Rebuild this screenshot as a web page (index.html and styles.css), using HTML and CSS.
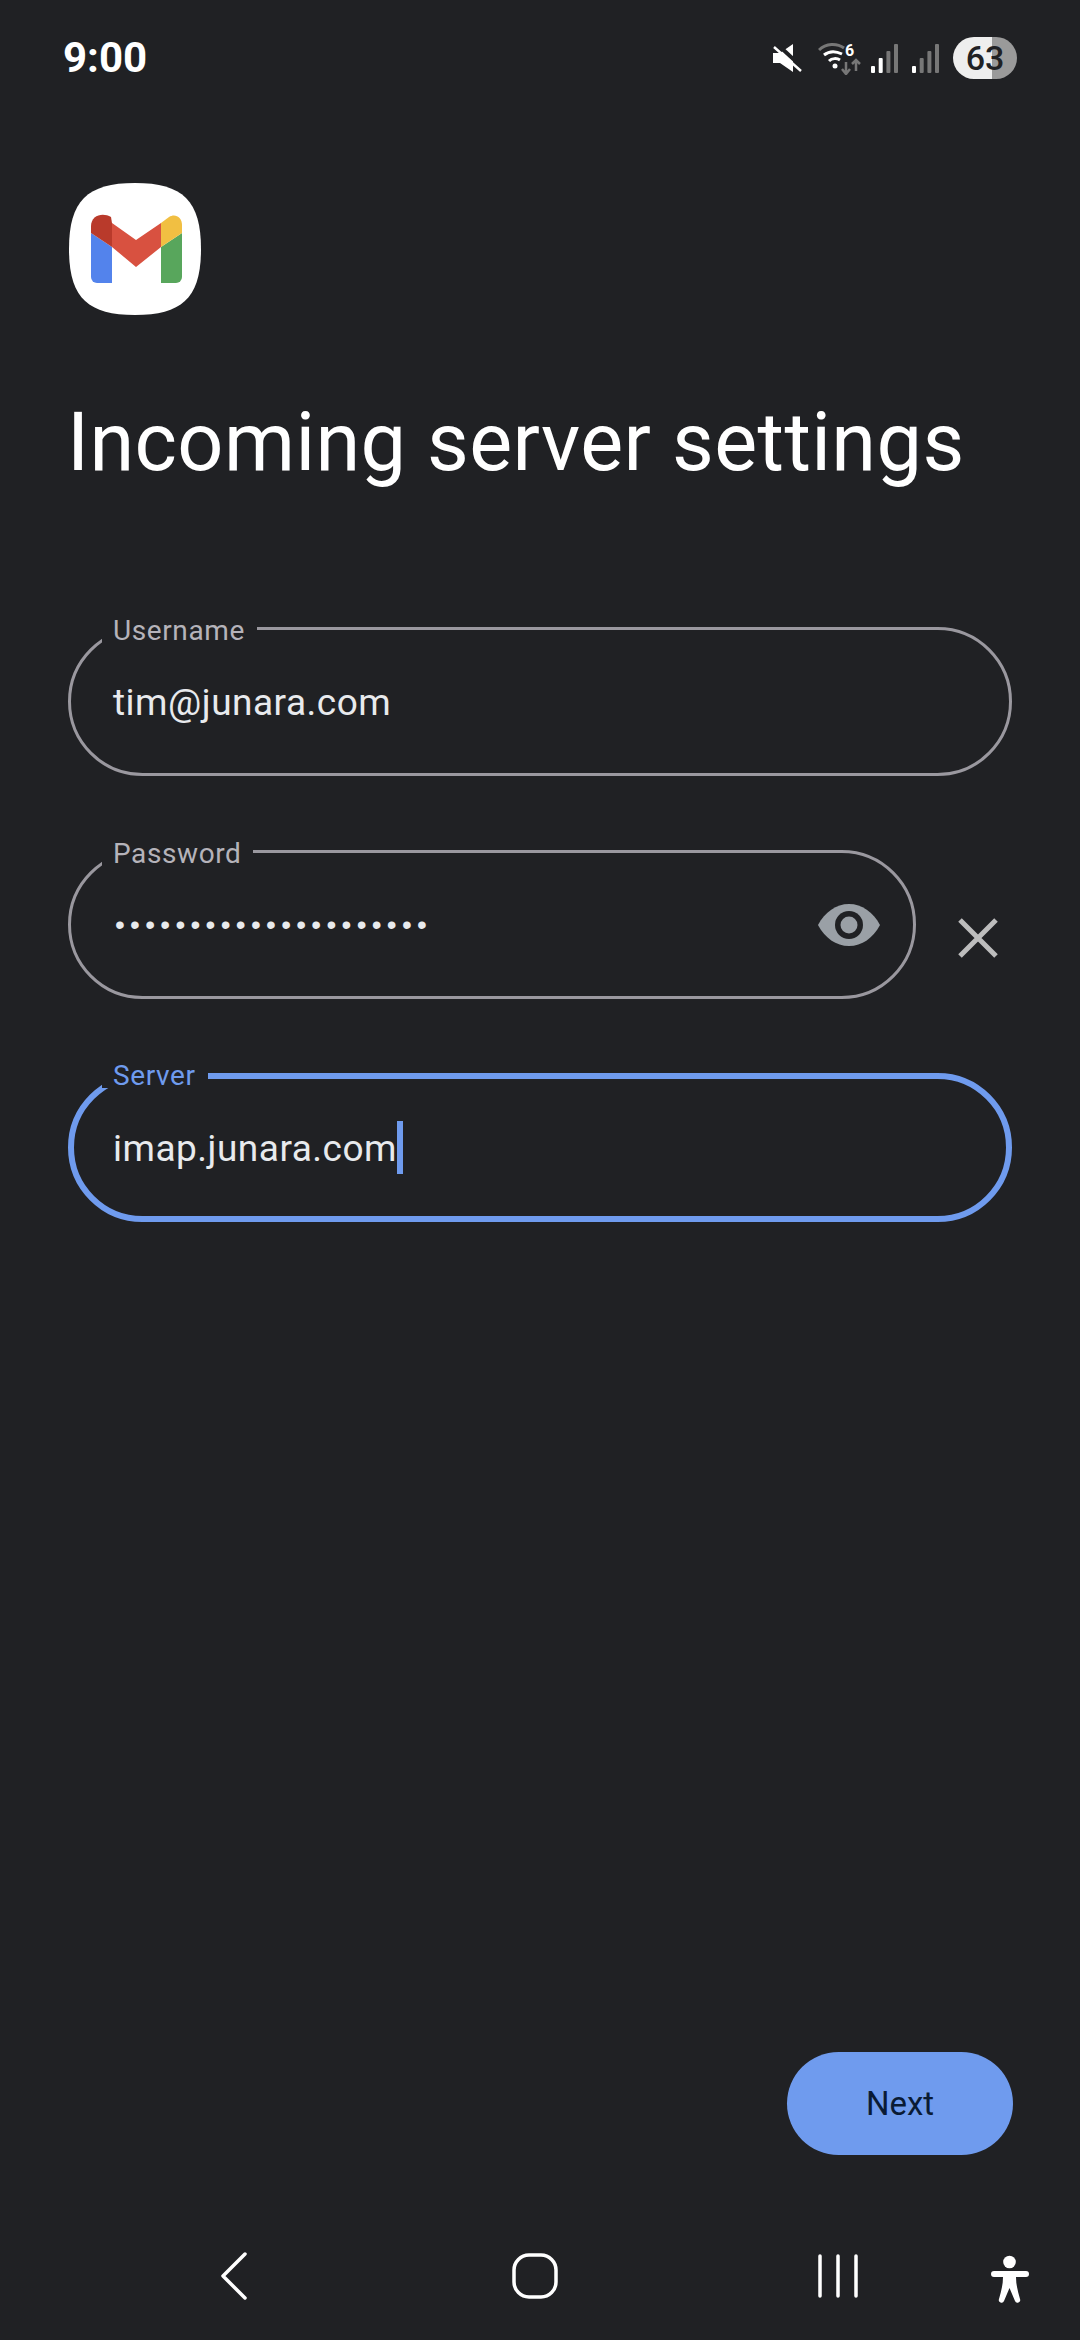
FILE: index.html
```html
<!DOCTYPE html>
<html lang="en">
  <head>
    <meta charset="UTF-8" />
    <title>Incoming server settings</title>
    <link rel="stylesheet" href="styles.css">
  </head>
  <body>
    <div class="statusBar">
      <span class="time">9:00</span>
      <div class="statusIcons">
        <svg class="muteIcon" width="29" height="28" viewBox="0 0 29 28">
          <path d="M0 9h7L20 0v28L7 19H0z" fill="#fff"/>
          <path d="M4 0l27 25" stroke="#202124" stroke-width="4" fill="none"/>
          <path d="M1 3l27 24" stroke="#fff" stroke-width="2.500" fill="none"/>
        </svg>
        <svg class="wifiIcon" width="44" height="36" viewBox="0 -4 44 36">
          <path d="M1 7C8 0 19 0 26 5" stroke="#777" stroke-width="3" fill="none"/>
          <path d="M6 12c5-4 12-4 18-1M11 18c3-3 8-3 11-1" stroke="#fff" stroke-width="3" fill="none"/>
          <circle cx="17" cy="23" r="2.500" fill="#fff"/>
          <path d="M28 19v12M24 26l4 5 4-5" stroke="#777" stroke-width="2.500" fill="none"/>
          <path d="M38 28V17M34 21l4-4 4 4" stroke="#777" stroke-width="2.500" fill="none"/>
          <text x="27" y="13" class="wifiSix">6</text>
        </svg>
        <svg class="signalIcon signalFirst" width="27" height="29" viewBox="0 0 27 29">
          <rect x="0" y="22" width="4" height="7" rx="1" fill="#fff"/>
          <rect x="7.700" y="14" width="4" height="15" rx="1" fill="#fff"/>
          <rect x="15.400" y="7" width="4" height="22" rx="1" fill="#777"/>
          <rect x="23" y="0" width="4" height="29" rx="1" fill="#777"/>
        </svg>
        <svg class="signalIcon" width="27" height="29" viewBox="0 0 27 29">
          <rect x="0" y="22" width="4" height="7" rx="1" fill="#fff"/>
          <rect x="7.700" y="14" width="4" height="15" rx="1" fill="#777"/>
          <rect x="15.400" y="7" width="4" height="22" rx="1" fill="#777"/>
          <rect x="23" y="0" width="4" height="29" rx="1" fill="#777"/>
        </svg>
        <span class="battery">63</span>
      </div>
    </div>

    <main class="content">
      <svg class="appLogo" width="132" height="132" viewBox="0 0 132 132">
        <path d="M66 0C114 0 132 18 132 66S114 132 66 132 0 114 0 66 18 0 66 0z" fill="#fff"/>
        <path d="M22 50l21 14v36H28a6 6 0 0 1-6-6z" fill="#5383ec"/>
        <path d="M113 50L92 64v36h15a6 6 0 0 0 6-6z" fill="#58a65c"/>
        <path d="M43 40l24 17 25-17v24L67 84 43 64z" fill="#d85140"/>
        <path d="M22 50v-7c0-11 12-14 20-9l1 6v24z" fill="#b93a2b"/>
        <path d="M92 40l8-6c6-4 13 0 13 8v8L92 64z" fill="#f1bf42"/>
      </svg>

      <h1 class="pageTitle">Incoming server settings</h1>

      <div class="fieldList">
        <div class="fieldRow">
          <div class="field">
            <span class="fieldLabel">Username</span>
            <span class="fieldValue">tim@junara.com</span>
          </div>
        </div>

        <div class="fieldRow">
          <div class="field fieldPassword">
            <span class="fieldLabel">Password</span>
            <span class="fieldValue passwordDots">•••••••••••••••••••••</span>
            <svg class="eyeIcon" width="62" height="42" viewBox="0 0 62 42">
              <path d="M0 21C7 8 18 0 31 0s24 8 31 21c-7 13-18 21-31 21S7 34 0 21z" fill="#9aa0a6"/>
              <circle cx="31" cy="21" r="14" fill="#202124"/>
              <circle cx="31" cy="21" r="8.500" fill="#9aa0a6"/>
            </svg>
          </div>
          <svg class="clearIcon" width="40" height="40" viewBox="0 0 40 40">
            <path d="M2 2l36 36M38 2L2 38" stroke="#bdbdbd" stroke-width="5" fill="none"/>
          </svg>
        </div>

        <div class="fieldRow">
          <div class="field fieldFocused">
            <span class="fieldLabel">Server</span>
            <span class="fieldValue">imap.junara.com</span>
            <i class="caret"></i>
          </div>
        </div>
      </div>
    </main>

    <div class="actions">
      <button class="nextBtn">Next</button>
    </div>

    <nav class="navBar">
      <svg class="navBack" width="28" height="48" viewBox="0 0 28 48">
        <path d="M25 2L3 24l22 22" stroke="#fff" stroke-width="3.500" fill="none" stroke-linecap="round" stroke-linejoin="round"/>
      </svg>
      <svg class="navHome" width="46" height="48" viewBox="0 0 46 48">
        <rect x="2" y="3" width="42" height="42" rx="15" stroke="#fff" stroke-width="3.500" fill="none"/>
      </svg>
      <svg class="navRecents" width="40" height="48" viewBox="0 0 40 48">
        <path d="M2 4v40M20 4v40M38 4v40" stroke="#fff" stroke-width="3.500" stroke-linecap="round" fill="none"/>
      </svg>
      <svg class="navPerson" width="38" height="54" viewBox="0 0 38 54">
        <circle cx="18.500" cy="10" r="6.300" fill="#fff"/>
        <path d="M3 19h32a3 3 0 0 1 0 6H25c0 8 2 15 4 22a2.500 2.500 0 0 1-5 2L18.500 36 13 49a2.500 2.500 0 0 1-5-2c2-7 4-14 4-22H3a3 3 0 0 1 0-6z" fill="#fff"/>
      </svg>
    </nav>
  </body>
</html>
```

FILE: styles.css
```css
* {
  box-sizing: border-box;
}

body {
  margin: 0;
  width: 1080px;
  height: 2340px;
  background: #202124;
  color: #e8eaed;
  font-family: Roboto, sans-serif;
  display: flex;
  flex-direction: column;
  overflow: hidden;
}

.statusBar {
  height: 116px;
  padding: 33px 63px 0 63px;
  display: flex;
  justify-content: space-between;
  align-items: flex-start;
}

.time {
  font-weight: 700;
  font-size: 42px;
  line-height: 50px;
  color: #fff;
}

.statusIcons {
  display: flex;
  align-items: center;
  height: 50px;
}

.wifiIcon {
  margin-left: 16px;
  margin-top: -2px;
}

.wifiSix {
  font-weight: 700;
  font-size: 16px;
  fill: #fff;
}

.signalIcon {
  margin-left: 14px;
}

.signalFirst {
  margin-left: 9px;
}

.battery {
  width: 64px;
  height: 42px;
  border-radius: 21px;
  margin-left: 14px;
  background: linear-gradient(to right, #eeeeee 61%, #9a9a9a 61%);
  color: #202124;
  font-weight: 500;
  font-size: 34px;
  line-height: 42px;
  text-align: center;
}

.content {
  flex: 1;
  padding: 67px 0 0 68px;
}

.appLogo {
  display: block;
  margin-left: 1px;
}

.pageTitle {
  margin: 82px 0 0 -1px;
  font-weight: 400;
  font-size: 81px;
  line-height: 92px;
  letter-spacing: 0.400px;
  color: #fff;
}

.fieldList {
  margin-top: 138px;
  width: 944px;
  display: flex;
  flex-direction: column;
  gap: 74px;
}

.fieldRow {
  display: flex;
  align-items: center;
}

.field {
  position: relative;
  flex: 1;
  height: 149px;
  border: 3px solid #9a989f;
  border-radius: 75px;
  padding: 0 42px;
  display: flex;
  align-items: center;
}

.fieldLabel {
  position: absolute;
  left: 31px;
  top: -11px;
  padding: 0 12px 0 11px;
  background: #202124;
  font-size: 28px;
  line-height: 24px;
  letter-spacing: 0.600px;
  color: #b5b3ba;
}

.fieldValue {
  padding-top: 2px;
  font-size: 37px;
  letter-spacing: 0.500px;
  color: #e8eaed;
  white-space: nowrap;
}

.fieldPassword {
  flex: none;
  width: 848px;
  padding-right: 33px;
}

.passwordDots {
  margin-left: 2px;
  padding-top: 0;
  font-family: "Liberation Sans", sans-serif;
  font-size: 28px;
  letter-spacing: 5.300px;
}

.eyeIcon {
  margin-left: auto;
}

.clearIcon {
  margin: 26px 0 0 42px;
}

.fieldFocused {
  border: 6px solid #6f9bee;
  padding: 0 39px;
}

.fieldFocused .fieldLabel {
  color: #6f9bee;
  left: 28px;
  top: -15px;
}

.caret {
  width: 6px;
  height: 53px;
  background: #6f9bee;
}

.actions {
  padding: 0 67px 0 0;
  display: flex;
  justify-content: flex-end;
}

.nextBtn {
  width: 226px;
  height: 103px;
  border: none;
  border-radius: 52px;
  background: #6f9bee;
  color: #0a1b35;
  font-family: Roboto, sans-serif;
  font-weight: 400;
  font-size: 33px;
}

.navBar {
  height: 185px;
  display: flex;
  align-items: flex-start;
  padding-top: 97px;
}

.navBack {
  margin-left: 220px;
}

.navHome {
  margin-left: 264px;
}

.navRecents {
  margin-left: 260px;
}

.navPerson {
  margin-left: 133px;
}
```
